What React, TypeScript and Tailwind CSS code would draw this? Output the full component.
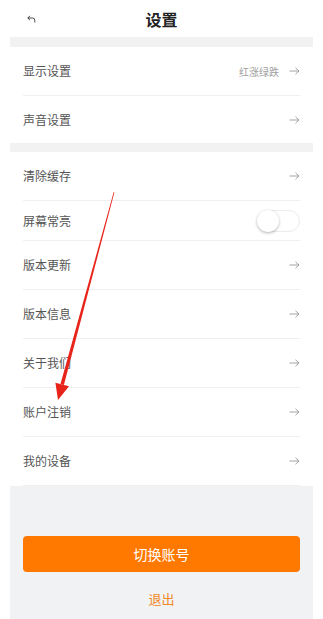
import React, { useState } from "react";

type Row = { label: string; value?: string; toggle?: boolean };

const groupOne: Row[] = [{ label: "显示设置", value: "红涨绿跌" }, { label: "声音设置" }];

const groupTwo: Row[] = [
  { label: "清除缓存" },
  { label: "屏幕常亮", toggle: true },
  { label: "版本更新" },
  { label: "版本信息" },
  { label: "关于我们" },
  { label: "账户注销" },
  { label: "我的设备" },
];

const font = { fontFamily: '"Noto Sans CJK SC", "Noto Sans", sans-serif' };

const ArrowRight = () => (
  <svg width="11" height="8" viewBox="0 0 11 8" fill="none" stroke="#9a9a9a" strokeWidth="0.9">
    <path d="M0.5 4h9.5M6.5 0.8 10 4 6.5 7.2" />
  </svg>
);

const Toggle: React.FC = () => {
  const [on, setOn] = useState(false);
  return (
    <button
      onClick={() => setOn(!on)}
      className={`relative w-[43px] h-[22px] rounded-full border border-[#ececec] ${on ? "bg-[#ff7a00]" : "bg-white"}`}
    >
      <span
        className={`absolute top-[-1px] w-[22px] h-[22px] rounded-full bg-white shadow-[0_1px_3px_rgba(0,0,0,0.3)] ${on ? "left-[20px]" : "left-[-1px]"}`}
      />
    </button>
  );
};

const SettingRow: React.FC<{ row: Row; last?: boolean }> = ({ row, last }) => (
  <div
    className={`flex items-center justify-between ${row.toggle ? "h-[40px]" : last ? "h-[47px]" : "h-[49px]"} ${last ? "" : "border-b border-[#efefef]"}`}
  >
    <span className="text-[12px] text-[#555555]">{row.label}</span>
    {row.toggle ? (
      <Toggle />
    ) : (
      <div className="flex items-center gap-[10px]">
        {row.value && <span className="text-[10px] text-[#a0a0a0]">{row.value}</span>}
        <ArrowRight />
      </div>
    )}
  </div>
);

export default function App() {
  return (
    <div className="relative w-full min-h-[619px] bg-white flex flex-col" style={font}>
      {/* 顶部导航 */}
      <div className="h-[37px] flex items-center">
        <div className="w-[60px] pl-[27px] flex items-center">
          <svg width="9" height="8" viewBox="0 0 9 8" fill="none" stroke="#333" strokeWidth="0.9">
            <path d="M3 0.8 0.8 3 3 5.2M0.8 3h4.7a2.3 2.3 0 0 1 2.3 2.3V7.5" />
          </svg>
        </div>
        <h1 className="flex-1 text-center text-[16px] font-bold text-[#222222]">设置</h1>
        <div className="w-[60px]" />
      </div>

      <div className="flex-1 flex flex-col mx-[10px]">
        <div className="h-[10px] bg-[#f2f2f2]" />
        <div className="px-[13px]">
          {groupOne.map((r, i) => (
            <SettingRow key={r.label} row={r} last={i === groupOne.length - 1} />
          ))}
        </div>
        <div className="h-[9px] bg-[#f2f2f2]" />
        <div className="px-[13px]">
          {groupTwo.map((r) => (
            <SettingRow key={r.label} row={r} />
          ))}
        </div>

        {/* 底部按钮 */}
        <div className="flex-1 bg-[#f1f2f4] px-[13px] pt-[50px] flex flex-col items-center">
          <button className="w-full h-[36px] rounded-[4px] bg-[#ff7800] text-white text-[14px]">
            切换账号
          </button>
          <span className="mt-[17px] text-[13px] text-[#f08a2a]">退出</span>
        </div>
      </div>

      {/* 标注箭头 */}
      <svg className="absolute left-0 top-0 pointer-events-none" width="323" height="619" viewBox="0 0 323 619">
        <polygon points="113.7,192 114.4,192.2 63.9,385 60.5,384" fill="#e8231a" />
        <polygon points="58,400 55.4,382.7 69,386.3" fill="#e8231a" />
      </svg>
    </div>
  );
}
